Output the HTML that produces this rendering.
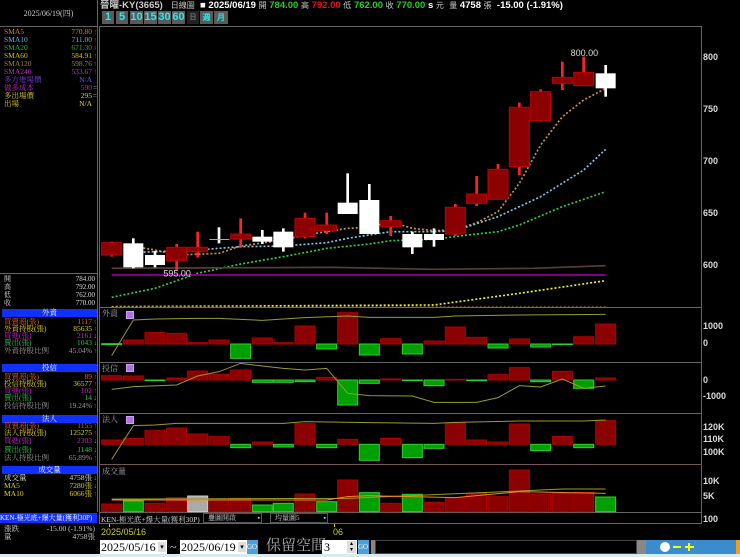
<!DOCTYPE html>
<html><head><meta charset="utf-8"><style>
*{margin:0;padding:0;box-sizing:border-box}
body{width:740px;height:557px;background:#000;position:relative;overflow:hidden;font-family:"Liberation Serif","Noto Serif CJK TC",serif;color:#ddd}
.a{position:absolute;white-space:nowrap}
.r{font-size:7.5px;line-height:8px;height:8px;left:4px;width:93px;overflow:hidden}
.r span{position:absolute;right:5px}
.r i{position:absolute;right:0;font-style:normal;font-size:7px}
.up{color:#f22}.dn{color:#2d2}
.hd{position:absolute;left:2px;width:95px;height:8px;background:#1030ff;color:#fff;font-size:7.5px;line-height:8px;text-align:center}
.btn{position:absolute;top:11px;height:13px;background:#5a5a5a;color:#2ee;font:bold 11px/13px "Liberation Sans",sans-serif;text-align:center}
.ax{position:absolute;left:703px;font:bold 9px "Liberation Sans",sans-serif;color:#ddd}
.hl{position:absolute;height:1px;background:#666}
.vl{position:absolute;width:1px;background:#666}
.lab{position:absolute;left:102px;font-size:8px;color:#aaa}
.ic{position:absolute;left:126px;width:8px;height:8px;background:#b070e0;border:1px solid #d0a0ff}
</style></head><body>
<div class="a" style="left:100px;top:0;font:bold 9.5px/11px 'Liberation Sans','Noto Sans CJK TC',sans-serif;color:#ccc">晉曜-KY(3665) &nbsp; <span style="font-weight:normal;font-size:8px">日線圖</span> &nbsp;<span style="color:#fff">■ 2025/06/19</span> <span style="font-size:8px;font-weight:normal">開</span> <span style="color:#2c2">784.00</span> <span style="font-size:8px;font-weight:normal">高</span> <span style="color:#e11">792.00</span> <span style="font-size:8px;font-weight:normal">低</span> <span style="color:#2c2">762.00</span> <span style="font-size:8px;font-weight:normal">收</span> <span style="color:#2c2">770.00</span> <span style="color:#fff">s</span> <span style="font-size:8px;font-weight:normal">元</span> &nbsp;<span style="font-size:8px;font-weight:normal">量</span> <span style="color:#fff">4758</span> <span style="font-size:8px;font-weight:normal">張</span> &nbsp;<span style="color:#fff">-15.00 (-1.91%)</span></div>
<div class="btn" style="left:102px;width:12px">1</div>
<div class="btn" style="left:116px;width:12px">5</div>
<div class="btn" style="left:130px;width:13px">10</div>
<div class="btn" style="left:144px;width:13px">15</div>
<div class="btn" style="left:158px;width:13px">30</div>
<div class="btn" style="left:172px;width:13px">60</div>
<div class="btn" style="left:187px;width:12px;background:#222;font-size:7px;color:#777">日</div>
<div class="btn" style="left:200px;width:13px;font-size:8px">週</div>
<div class="btn" style="left:214px;width:14px;font-size:8px">月</div>
<div class="hl" style="left:99px;top:26px;width:603px"></div>
<div class="vl" style="left:97px;top:0;height:512px"></div>
<div class="vl" style="left:99px;top:26px;height:497px"></div>
<div class="vl" style="left:701px;top:26px;height:497px"></div>
<div class="hl" style="left:0;top:26px;width:97px"></div>
<div class="hl" style="left:99px;top:307px;width:603px"></div>
<div class="hl" style="left:99px;top:362px;width:603px"></div>
<div class="hl" style="left:99px;top:413px;width:603px"></div>
<div class="hl" style="left:99px;top:464px;width:603px;background:#755"></div>
<div class="hl" style="left:99px;top:512px;width:603px"></div>
<div class="hl" style="left:99px;top:523px;width:603px"></div>
<div class="hl" style="left:0;top:273px;width:97px"></div>

<div class="a" style="left:0;top:8px;width:97px;text-align:center;font-size:8px;color:#ccc">2025/06/19(四)</div>
<div class="a r" style="top:28px;color:#d08040">SMA5<span>770.80</span><i class="up">↑</i></div>
<div class="a r" style="top:36px;color:#70b0e0">SMA10<span>711.00</span><i class="up">↑</i></div>
<div class="a r" style="top:44px;color:#20b040">SMA20<span>671.30</span><i class="up">↑</i></div>
<div class="a r" style="top:52px;color:#d0c020">SMA60<span>584.91</span><i class="up">↑</i></div>
<div class="a r" style="top:60px;color:#a08050">SMA120<span>598.76</span><i class="up">↑</i></div>
<div class="a r" style="top:68px;color:#c030c0">SMA240<span>533.67</span><i class="up">↑</i></div>
<div class="a r" style="top:76px;color:#8040e0">多方進場價<span>N/A</span></div>
<div class="a r" style="top:84px;color:#d020d0">做多成本<span>590</span><i style="color:#ccc">=</i></div>
<div class="a r" style="top:92px;color:#e0d020">多出場價<span>295</span><i style="color:#ccc">=</i></div>
<div class="a r" style="top:100px;color:#e0d020">出場<span>N/A</span></div>

<div class="a r" style="top:275px;color:#ddd;font-size:7px">開<span style="right:2px">784.00</span></div>
<div class="a r" style="top:283px;color:#ddd;font-size:7px">高<span style="right:2px">792.00</span></div>
<div class="a r" style="top:291px;color:#ddd;font-size:7px">低<span style="right:2px">762.00</span></div>
<div class="a r" style="top:299px;color:#ddd;font-size:7px">收<span style="right:2px">770.00</span></div>

<div class="hd" style="top:309px">外資</div>
<div class="a r" style="top:318px;color:#e06020">買賣超(張)<span>1117</span><i class="up">↑</i></div>
<div class="a r" style="top:325px;color:#e0d020">外資持股(張)<span>85635</span><i class="up">↑</i></div>
<div class="a r" style="top:332px;color:#d020d0">買進(張)<span>2161</span><i class="dn">↓</i></div>
<div class="a r" style="top:339px;color:#20d040">賣出(張)<span>1043</span><i class="dn">↓</i></div>
<div class="a r" style="top:347px;color:#999">外資持股比例<span>45.04%</span><i class="up">↑</i></div>

<div class="hd" style="top:364px">投信</div>
<div class="a r" style="top:373px;color:#e06020">買賣超(張)<span>89</span><i class="up">↑</i></div>
<div class="a r" style="top:380px;color:#e0d020">投信持股(張)<span>36577</span><i class="up">↑</i></div>
<div class="a r" style="top:387px;color:#d020d0">買進(張)<span>102</span><i class="up">↑</i></div>
<div class="a r" style="top:394px;color:#20d040">賣出(張)<span>14</span><i class="dn">↓</i></div>
<div class="a r" style="top:402px;color:#999">投信持股比例<span>19.24%</span><i class="up">↑</i></div>

<div class="hd" style="top:415px">法人</div>
<div class="a r" style="top:422px;color:#e06020">買賣超(張)<span>1155</span><i class="up">↑</i></div>
<div class="a r" style="top:429px;color:#e0d020">法人持股(張)<span>125275</span><i class="up">↑</i></div>
<div class="a r" style="top:437px;color:#d020d0">買進(張)<span>2303</span><i class="dn">↓</i></div>
<div class="a r" style="top:446px;color:#20d040">賣出(張)<span>1148</span><i class="dn">↓</i></div>
<div class="a r" style="top:454px;color:#999">法人持股比例<span>65.89%</span><i class="up">↑</i></div>

<div class="hd" style="top:466px">成交量</div>
<div class="a r" style="top:474px;color:#ddd">成交量<span>4758張</span><i class="dn">↓</i></div>
<div class="a r" style="top:482px;color:#e0d020">MA5<span>7280張</span><i class="dn">↓</i></div>
<div class="a r" style="top:490px;color:#e0d020">MA10<span>6066張</span><i class="up">↑</i></div>

<div class="a" style="left:0;top:513px;width:97px;height:10px;background:#1030ff;color:#fff;font-size:7px;line-height:10px;overflow:hidden">KEN-極光底+爆大量(獲利30P)</div>
<div class="a r" style="top:525px;color:#ccc">漲跌<span style="right:2px">-15.00 (-1.91%)</span></div>
<div class="a r" style="top:533px;color:#ccc">量<span style="right:2px">4758張</span></div>

<div class="ax" style="top:52px">800</div>
<div class="ax" style="top:104px">750</div>
<div class="ax" style="top:156px">700</div>
<div class="ax" style="top:208px">650</div>
<div class="ax" style="top:260px">600</div>
<div class="ax" style="top:321px">1000</div>
<div class="ax" style="top:338px">0</div>
<div class="ax" style="top:375px">0</div>
<div class="ax" style="top:391px">-1000</div>
<div class="ax" style="top:422px">120K</div>
<div class="ax" style="top:434px">110K</div>
<div class="ax" style="top:447px">100K</div>
<div class="ax" style="top:476px">10K</div>
<div class="ax" style="top:491px">5K</div>
<div class="ax" style="top:514px">100</div>

<svg class="a" style="left:100px;top:40px" width="540" height="270" viewBox="0 0 1620 810">
<g fill="none" stroke-width="5" stroke-dasharray="6 6">
<polyline stroke="#d09040" points="35,608 165,630 230,645 357,640 422,618 550,600 615,585 743,565 808,562 872,545 937,565 1002,572 1066,570 1130,548 1194,515 1258,430 1322,315 1387,230 1451,180 1517,145"/>
<polyline stroke="#80c8e8" points="35,640 165,635 293,630 422,620 550,618 680,608 743,595 872,575 1002,575 1066,572 1194,530 1322,470 1451,390 1517,328"/>
<polyline stroke="#30d040" points="35,772 165,745 293,700 422,672 550,650 680,625 808,612 872,602 1002,598 1130,582 1194,575 1258,555 1387,500 1517,455"/>
<polyline stroke="#f0f020" points="35,800 1002,795 1258,760 1517,722"/>
</g>
<polyline fill="none" stroke="#5a4030" stroke-width="5" points="35,685 700,682 1000,688 1300,685 1517,677"/>
<line x1="35" y1="705" x2="1517" y2="705" stroke="#800080" stroke-width="6"/>
<line x1="35" y1="801" x2="1517" y2="801" stroke="#a07020" stroke-width="4" stroke-dasharray="6 6"/>
<g fill="#f22">
<rect x="31" y="605" width="8" height="45"/><rect x="226" y="612" width="8" height="78"/><rect x="289" y="575" width="8" height="77"/><rect x="418" y="535" width="8" height="85"/><rect x="611" y="518" width="8" height="77"/><rect x="676" y="518" width="8" height="64"/><rect x="868" y="528" width="8" height="60"/><rect x="1062" y="492" width="8" height="96"/><rect x="1126" y="408" width="8" height="90"/><rect x="1190" y="372" width="8" height="106"/><rect x="1254" y="188" width="8" height="217"/><rect x="1318" y="148" width="8" height="97"/><rect x="1383" y="65" width="8" height="85"/><rect x="1447" y="50" width="8" height="87"/>
</g>
<g fill="#8b0000" stroke="#c00000" stroke-width="3">
<rect x="5" y="608" width="60" height="37"/><rect x="200" y="622" width="60" height="40"/><rect x="263" y="622" width="60" height="13"/><rect x="392" y="582" width="60" height="15"/><rect x="585" y="535" width="60" height="55"/><rect x="650" y="555" width="60" height="17"/><rect x="842" y="542" width="60" height="18"/><rect x="1036" y="502" width="60" height="80"/><rect x="1100" y="462" width="60" height="28"/><rect x="1164" y="388" width="60" height="90"/><rect x="1228" y="202" width="60" height="178"/><rect x="1292" y="155" width="60" height="87"/><rect x="1357" y="112" width="60" height="18"/><rect x="1421" y="97" width="60" height="40"/>
</g>
<g fill="#fff">
<rect x="96" y="595" width="8" height="90"/><rect x="70" y="610" width="60" height="72"/>
<rect x="161" y="633" width="8" height="49"/><rect x="135" y="645" width="60" height="30"/>
<rect x="353" y="562" width="8" height="48"/><rect x="328" y="597" width="60" height="3" fill="#aaa"/>
<rect x="483" y="570" width="8" height="42"/><rect x="457" y="590" width="60" height="15"/>
<rect x="546" y="565" width="8" height="70"/><rect x="520" y="575" width="60" height="47"/>
<rect x="739" y="400" width="8" height="122"/><rect x="713" y="488" width="60" height="34"/>
<rect x="804" y="432" width="8" height="150"/><rect x="778" y="480" width="60" height="102"/>
<rect x="933" y="575" width="8" height="67"/><rect x="907" y="582" width="60" height="40"/>
<rect x="998" y="565" width="8" height="55"/><rect x="972" y="582" width="60" height="18"/>
<rect x="1513" y="75" width="8" height="95"/><rect x="1487" y="100" width="60" height="45"/>
</g>
<text x="1412" y="48" fill="#ddd" font-family="Liberation Sans,sans-serif" font-size="27">800.00</text>
<text x="190" y="710" fill="#ddd" font-family="Liberation Sans,sans-serif" font-size="27">595.00</text>
</svg>

<div class="lab" style="top:308px">外資</div><div class="ic" style="top:311px"></div>
<div class="lab" style="top:363px">投信</div><div class="ic" style="top:364px"></div>
<div class="lab" style="top:414px">法人</div><div class="ic" style="top:416px"></div>
<div class="lab" style="top:466px">成交量</div>
<svg class="a" style="left:100px;top:305px" width="540" height="210" viewBox="0 0 1620 630">
<g fill="#8b0000" stroke="#b00000" stroke-width="3">
<rect x="70" y="105" width="60" height="12"/><rect x="135" y="82" width="60" height="35"/><rect x="200" y="85" width="60" height="32"/><rect x="263" y="113" width="60" height="4"/><rect x="327" y="105" width="60" height="12"/><rect x="457" y="99" width="60" height="18"/><rect x="520" y="113" width="60" height="4"/><rect x="585" y="63" width="60" height="54"/><rect x="713" y="23" width="60" height="94"/><rect x="842" y="101" width="60" height="16"/><rect x="972" y="108" width="60" height="9"/><rect x="1036" y="66" width="60" height="51"/><rect x="1100" y="97" width="60" height="20"/><rect x="1228" y="102" width="60" height="15"/><rect x="1421" y="95" width="60" height="22"/><rect x="1487" y="57" width="60" height="60"/>
<rect x="5" y="212" width="60" height="13"/><rect x="70" y="213" width="60" height="12"/><rect x="200" y="219" width="60" height="6"/><rect x="263" y="198" width="60" height="27"/><rect x="327" y="208" width="60" height="17"/><rect x="392" y="195" width="60" height="30"/><rect x="650" y="217" width="60" height="8"/><rect x="842" y="222" width="60" height="3"/><rect x="1036" y="223" width="60" height="2"/><rect x="1164" y="209" width="60" height="16"/><rect x="1228" y="188" width="60" height="37"/><rect x="1357" y="199" width="60" height="26"/><rect x="1487" y="219" width="60" height="6"/>
<rect x="5" y="405" width="60" height="13"/><rect x="70" y="400" width="60" height="18"/><rect x="135" y="377" width="60" height="41"/><rect x="200" y="369" width="60" height="49"/><rect x="263" y="387" width="60" height="31"/><rect x="327" y="395" width="60" height="23"/><rect x="457" y="411" width="60" height="7"/><rect x="585" y="356" width="60" height="62"/><rect x="713" y="403" width="60" height="15"/><rect x="842" y="400" width="60" height="18"/><rect x="1036" y="354" width="60" height="64"/><rect x="1100" y="405" width="60" height="13"/><rect x="1164" y="411" width="60" height="7"/><rect x="1228" y="357" width="60" height="61"/><rect x="1357" y="394" width="60" height="24"/><rect x="1487" y="347" width="60" height="71"/>
<rect x="5" y="597" width="60" height="23"/><rect x="135" y="595" width="60" height="25"/><rect x="200" y="578" width="60" height="42"/><rect x="327" y="585" width="60" height="35"/><rect x="392" y="580" width="60" height="40"/><rect x="585" y="567" width="60" height="53"/><rect x="713" y="525" width="60" height="95"/><rect x="842" y="595" width="60" height="25"/><rect x="972" y="592" width="60" height="28"/><rect x="1036" y="578" width="60" height="42"/><rect x="1100" y="565" width="60" height="55"/><rect x="1164" y="575" width="60" height="45"/><rect x="1228" y="495" width="60" height="125"/><rect x="1292" y="567" width="60" height="53"/><rect x="1357" y="565" width="60" height="55"/><rect x="1421" y="562" width="60" height="58"/>
</g>
<g fill="#00a000" stroke="#30d030" stroke-width="3">
<rect x="5" y="116" width="60" height="3"/><rect x="392" y="117" width="60" height="43"/><rect x="650" y="117" width="60" height="15"/><rect x="778" y="117" width="60" height="33"/><rect x="907" y="117" width="60" height="30"/><rect x="1164" y="117" width="60" height="12"/><rect x="1292" y="117" width="60" height="9"/><rect x="1357" y="117" width="60" height="2"/>
<rect x="135" y="225" width="60" height="2"/><rect x="457" y="225" width="60" height="7"/><rect x="520" y="225" width="60" height="7"/><rect x="585" y="225" width="60" height="5"/><rect x="713" y="225" width="60" height="75"/><rect x="778" y="225" width="60" height="10"/><rect x="907" y="225" width="60" height="2"/><rect x="972" y="225" width="60" height="17"/><rect x="1100" y="225" width="60" height="2"/><rect x="1292" y="225" width="60" height="5"/><rect x="1421" y="225" width="60" height="25"/>
<rect x="392" y="418" width="60" height="10"/><rect x="520" y="418" width="60" height="8"/><rect x="650" y="418" width="60" height="10"/><rect x="778" y="418" width="60" height="48"/><rect x="907" y="418" width="60" height="40"/><rect x="972" y="418" width="60" height="12"/><rect x="1292" y="418" width="60" height="19"/><rect x="1421" y="418" width="60" height="10"/>
<rect x="70" y="588" width="60" height="32"/><rect x="457" y="600" width="60" height="20"/><rect x="520" y="595" width="60" height="25"/><rect x="650" y="590" width="60" height="30"/><rect x="778" y="563" width="60" height="57"/><rect x="907" y="568" width="60" height="52"/><rect x="1487" y="576" width="60" height="44"/>
</g>
<rect x="263" y="573" width="60" height="47" fill="#aaa" stroke="#ccc" stroke-width="3"/>
<g fill="none" stroke="#9a9a30" stroke-width="3">
<polyline points="35,152 100,45 165,42 293,40 357,40 422,43 487,46 550,42 615,38 743,33 808,37 1002,37 1066,33 1258,30 1517,28"/>
<polyline points="35,253 100,245 230,240 293,213 357,200 422,175 487,183 550,190 615,195 680,190 743,265 808,272 937,273 1002,292 1130,292 1194,278 1258,242 1322,246 1387,222 1451,250 1517,243"/>
<polyline points="35,463 100,362 165,360 230,355 550,355 615,350 808,353 1002,355 1066,352 1258,348 1451,348 1517,345"/>
<polyline points="35,582 743,580 1258,558 1387,552 1517,552"/>
</g>
<polyline fill="none" stroke="#ff8020" stroke-width="3" points="35,585 400,585 680,585 743,575 808,572 1066,578 1258,560 1517,565"/>
</svg>

<div class="a" style="left:101px;top:514px;font-size:7.5px;color:#ccc">KEN-極光底+爆大量(獲利30P)</div>
<div class="a" style="left:203px;top:513px;width:59px;height:10px;border:1px solid #555;font-size:7px;color:#ccc;padding-left:4px;line-height:8px">疊圖開啟<span style="position:absolute;right:1px">▪</span></div>
<div class="a" style="left:270px;top:513px;width:58px;height:10px;border:1px solid #555;font-size:7px;color:#ccc;padding-left:4px;line-height:8px">均量圖5<span style="position:absolute;right:1px">▪</span></div>
<div class="a" style="left:101px;top:527px;font:9px 'Liberation Sans',sans-serif;color:#cc2;">2025/05/16</div>
<div class="a" style="left:333px;top:527px;font:9px 'Liberation Sans',sans-serif;color:#cc2;">06</div>
<div class="a" style="left:109px;top:524px;width:1px;height:3px;background:#cc2"></div>
<div class="a" style="left:334px;top:524px;width:1px;height:3px;background:#cc2"></div>

<div class="a" style="left:100px;top:540px;width:67px;height:14px;background:#fff;color:#000;font-size:12px;line-height:14px;padding-left:1px">2025/05/16<span style="position:absolute;right:1px;top:2px;width:8px;height:10px;background:#ddd;font-size:7px;line-height:10px;text-align:center">▾</span></div>
<div class="a" style="left:170px;top:540px;color:#ccc;font-size:12px">~</div>
<div class="a" style="left:180px;top:540px;width:67px;height:14px;background:#fff;color:#000;font-size:12px;line-height:14px;padding-left:1px">2025/06/19<span style="position:absolute;right:1px;top:2px;width:8px;height:10px;background:#ddd;font-size:7px;line-height:10px;text-align:center">▾</span></div>
<div class="a" style="left:247px;top:540px;width:11px;height:14px;background:#4aa0d8;color:#fff;font-size:7px;line-height:14px">GO</div>
<div class="a" style="left:266px;top:538px;color:#aaa;font-size:15px;line-height:17px">保留空間</div>
<div class="a" style="left:322px;top:540px;width:35px;height:14px;background:#fff;color:#000;font-size:12px;line-height:14px;padding-left:2px">3<span style="position:absolute;right:1px;top:1px;width:9px;height:12px;background:#ddd;font-size:6px;line-height:6px;text-align:center">▴<br>▾</span></div>
<div class="a" style="left:358px;top:540px;width:11px;height:14px;background:#4aa0d8;color:#fff;font-size:7px;line-height:14px">GO</div>
<div class="a" style="left:371px;top:540px;width:4px;height:14px;background:#888"></div>
<div class="a" style="left:375px;top:540px;width:262px;height:14px;background:#000;border:1px solid #444"></div>
<div class="a" style="left:637px;top:540px;width:9px;height:14px;background:#888"></div>
<div class="a" style="left:646px;top:540px;width:90px;height:14px;background:#3a8ccc"></div>
<div class="a" style="left:660px;top:542px;width:10px;height:10px;border-radius:5px;background:#fff"></div>
<div class="a" style="left:673px;top:546px;width:8px;height:2px;background:#ff0"></div>
<div class="a" style="left:685px;top:546px;width:9px;height:2px;background:#ff0"></div>
<div class="a" style="left:688px;top:543px;width:2px;height:8px;background:#ff0"></div>
<div class="a" style="left:736px;top:540px;width:4px;height:14px;background:#f0a020"></div>
<div class="a" style="left:0;top:554px;width:740px;height:3px;background:#d4ecf2"></div>
</body></html>
